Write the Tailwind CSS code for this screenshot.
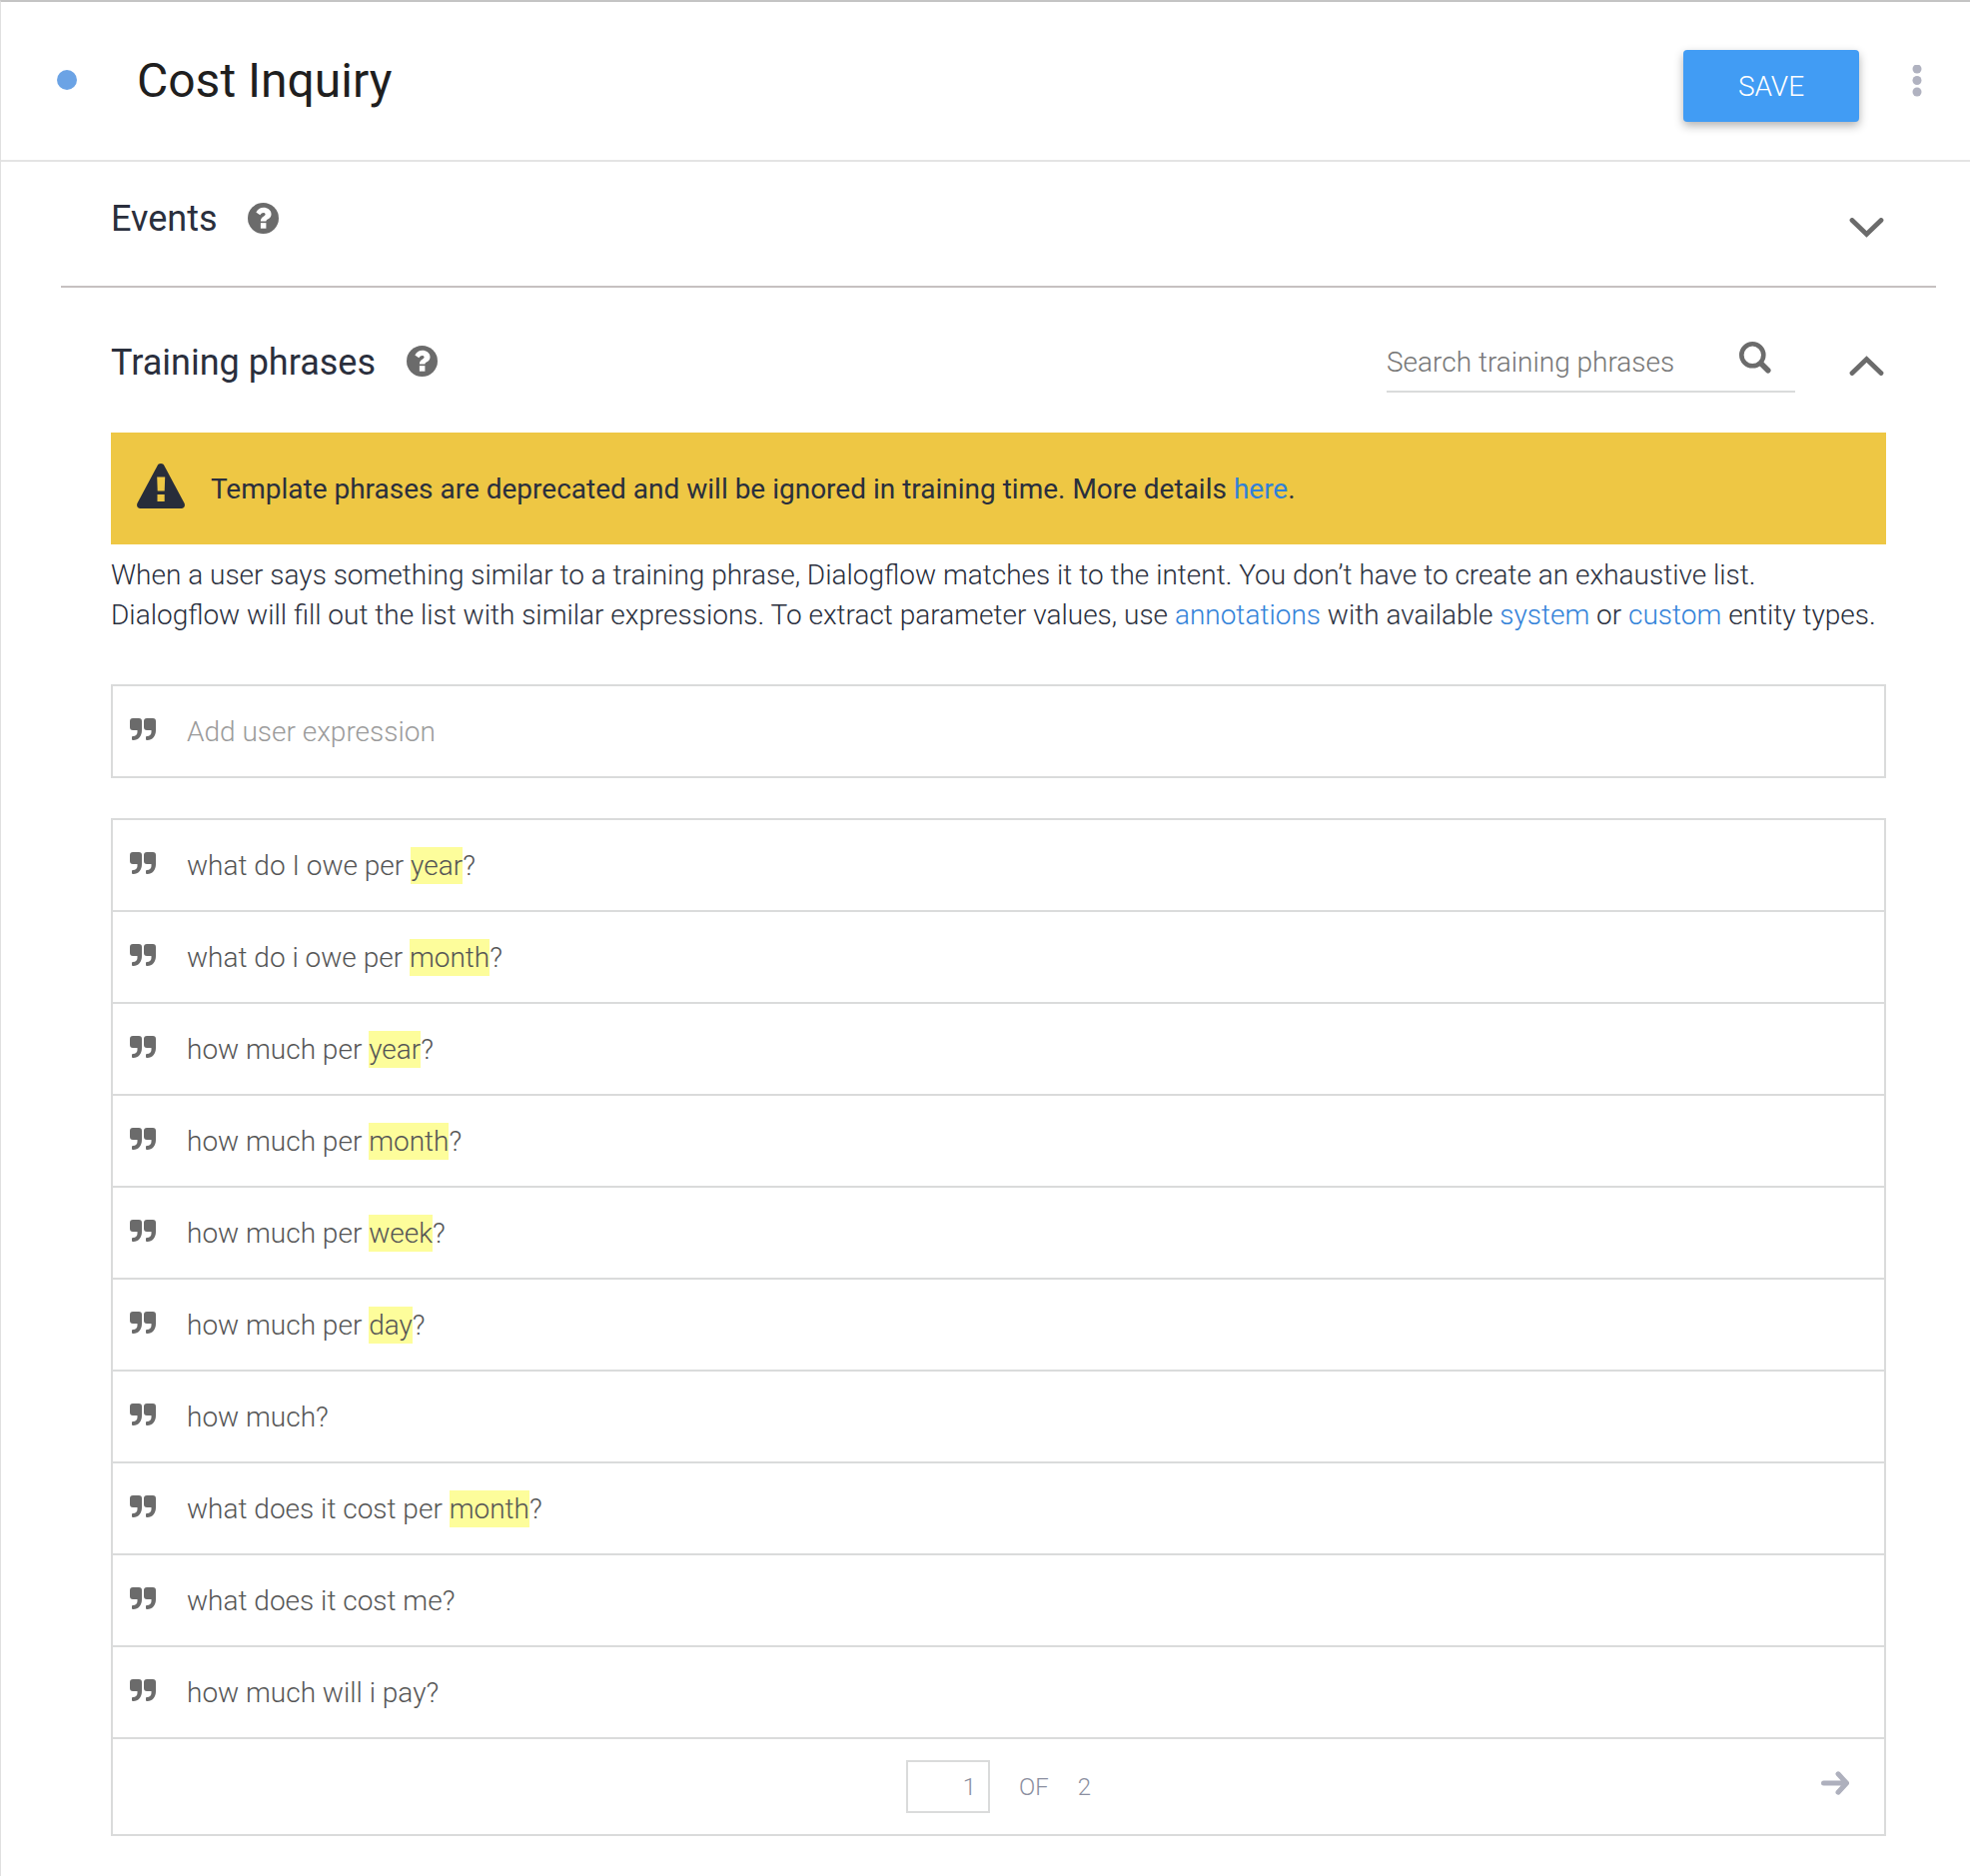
<!DOCTYPE html>
<html lang="en">
<head>
<meta charset="utf-8">
<meta name="viewport" content="width=device-width, initial-scale=1">
<title>Cost Inquiry</title>
<script src="https://cdn.jsdelivr.net/npm/@tailwindcss/browser@4"></script>
</head>
<body class="bg-white font-[Roboto,sans-serif] text-[28px] font-light leading-10 text-[#2a2f3d]">
<svg class="hidden" aria-hidden="true">
  <symbol id="quote" viewBox="0 0 26 28">
    <path d="M3 0h6a3 3 0 0 1 3 3v9c0 6-3.500 10-8.500 10h-.500a1 1 0 0 1-1-1v-2a1 1 0 0 1 1-1c3 0 4.500-2 4.500-4v-2H3a3 3 0 0 1-3-3V3a3 3 0 0 1 3-3zM17 0h6a3 3 0 0 1 3 3v9c0 6-3.500 10-8.500 10h-.500a1 1 0 0 1-1-1v-2a1 1 0 0 1 1-1c3 0 4.500-2 4.500-4v-2H17a3 3 0 0 1-3-3V3a3 3 0 0 1 3-3z" fill="#6b6b6b"/>
  </symbol>
  <symbol id="help" viewBox="0 0 32 32">
    <circle cx="16" cy="16" r="16" fill="#6b6b6b"/>
    <path d="M8.600 9.800C10.300 6.700 12.800 5 16.300 5c4 0 8 2.500 8 6.800 0 5-5.300 4.600-5.300 7.400H13.300c0-5.500 4.900-5 4.900-7.400 0-1-.900-1.600-2-1.600-1.400 0-2.300.700-3.500 2.400z" fill="#fff"/>
    <path d="M13.300 20.800H19v5.700h-5.700z" fill="#fff"/>
  </symbol>
</svg>

<div class="min-h-screen border-t-2 border-l border-t-[#c4c4c4] border-l-[#e0e0e0]">
  <header class="flex h-40 items-center border-b-2 border-[#e4e4e4] pl-14 pr-[37px]">
    <span class="mb-0.5 size-5 rounded-full bg-[#6ba3e5]"></span>
    <h1 class="ml-15 flex-1 text-[48px] font-normal leading-14 text-[#1f1f1f]">Cost Inquiry</h1>
    <button type="button" class="mt-2.5 h-18 w-44 rounded-sm bg-[#419cf4] pt-0.5 text-white shadow-[0_4px_10px_rgba(0,0,0,0.3)]">SAVE</button>
    <button type="button" aria-label="More options" class="ml-[42px] flex w-8 justify-center">
      <svg class="h-8 w-[10px]" viewBox="0 0 10 32" fill="#b0b2c0"><circle cx="5" cy="4" r="4.500"/><circle cx="5" cy="15.500" r="4.500"/><circle cx="5" cy="27" r="4.500"/></svg>
    </button>
  </header>

  <main class="ml-[60px] mr-[34px]">
    <section class="flex h-[126px] items-center border-b-2 border-[#c6c1c1] px-[50px] pb-2.5">
      <h2 class="text-[36px] font-normal">Events</h2>
      <button type="button" aria-label="About events" class="mb-0.5 ml-[30px]"><svg class="size-[31px]"><use href="#help"/></svg></button>
      <button type="button" aria-label="Expand events" class="ml-auto mt-[18px]">
        <svg class="h-5 w-[37px]" viewBox="0 0 37 20" fill="none" stroke="#6b6b6b" stroke-width="4.800" stroke-linecap="round"><path d="M3 2.500 17.500 16.500 32 2.500"/></svg>
      </button>
    </section>

    <section class="px-[50px]">
      <div class="flex h-[145px] items-center pt-1">
        <h2 class="text-[36px] font-normal">Training phrases</h2>
        <button type="button" aria-label="About training phrases" class="mb-0.5 ml-[31px]"><svg class="size-[31px]"><use href="#help"/></svg></button>
        <div class="ml-auto flex h-15 w-[409px] items-center border-b-2 border-[#dadbdb] pr-6">
          <input type="search" aria-label="Search training phrases" placeholder="Search training phrases" class="min-w-0 flex-1 pt-0.5 outline-none placeholder:text-[#757575]">
          <button type="button" aria-label="Search" class="mb-2">
            <svg class="size-8" viewBox="0 0 32 32" fill="none" stroke="#6b6b6b"><circle cx="13.300" cy="13.300" r="11" stroke-width="4.600"/><path d="M22 22l6.800 6.800" stroke-width="5.500" stroke-linecap="round"/></svg>
          </button>
        </div>
        <button type="button" aria-label="Collapse training phrases" class="ml-[54px] mt-1.5">
          <svg class="h-5 w-[37px]" viewBox="0 0 37 20" fill="none" stroke="#6b6b6b" stroke-width="4.800" stroke-linecap="round"><path d="M3 17.500 17.500 3.500 32 17.500"/></svg>
        </button>
      </div>

      <div role="alert" class="flex h-28 items-center gap-[26px] bg-[#eec744] px-[26px] pt-0.5 font-normal">
        <svg class="mb-2 h-[45px] w-12" viewBox="0 0 48 45"><path d="M24 0c1.600 0 2.800.800 3.600 2.400l19.800 37.200c1.400 2.700 0 5.400-3 5.400H3.600c-3 0-4.400-2.700-3-5.400L20.400 2.400C21.200.800 22.400 0 24 0z" fill="#282d3a"/><path d="M20.200 13.500h8l-.500 14h-7zM20.500 31h7.200v7h-7.200z" fill="#eec744"/></svg>
        <p>Template phrases are deprecated and will be ignored in training time. More details <a href="#" class="text-[#3181d8]">here</a>.</p>
      </div>

      <p class="pt-[11px]">When a user says something similar to a training phrase, Dialogflow matches it to the intent. You don’t have to create an exhaustive list.<br>Dialogflow will fill out the list with similar expressions. To extract parameter values, use <a href="#" class="text-[#3181d8]">annotations</a> with available <a href="#" class="text-[#3181d8]">system</a> or <a href="#" class="text-[#3181d8]">custom</a> entity types.</p>

      <div class="mt-[49px] flex h-[94px] items-center gap-[31px] border-2 border-[#dadbdb] pl-[17px] pr-4 pt-0.5">
        <svg class="h-7 w-[26px] shrink-0"><use href="#quote"/></svg>
        <input type="text" aria-label="Add user expression" placeholder="Add user expression" class="min-w-0 flex-1 outline-none placeholder:text-[#9b9b9b]">
      </div>

      <div class="mt-10 border-2 border-[#dadbdb] text-[#555555]">
        <ul>
          <li class="flex h-[92px] items-center gap-[31px] border-b-2 border-[#dadbdb] pl-[17px] pt-0.5"><svg class="h-7 w-[26px]"><use href="#quote"/></svg><p>what do I owe per <mark class="bg-[#fdfd9b] py-0.5 text-inherit">year</mark>?</p></li>
          <li class="flex h-[92px] items-center gap-[31px] border-b-2 border-[#dadbdb] pl-[17px] pt-0.5"><svg class="h-7 w-[26px]"><use href="#quote"/></svg><p>what do i owe per <mark class="bg-[#fdfd9b] py-0.5 text-inherit">month</mark>?</p></li>
          <li class="flex h-[92px] items-center gap-[31px] border-b-2 border-[#dadbdb] pl-[17px] pt-0.5"><svg class="h-7 w-[26px]"><use href="#quote"/></svg><p>how much per <mark class="bg-[#fdfd9b] py-0.5 text-inherit">year</mark>?</p></li>
          <li class="flex h-[92px] items-center gap-[31px] border-b-2 border-[#dadbdb] pl-[17px] pt-0.5"><svg class="h-7 w-[26px]"><use href="#quote"/></svg><p>how much per <mark class="bg-[#fdfd9b] py-0.5 text-inherit">month</mark>?</p></li>
          <li class="flex h-[92px] items-center gap-[31px] border-b-2 border-[#dadbdb] pl-[17px] pt-0.5"><svg class="h-7 w-[26px]"><use href="#quote"/></svg><p>how much per <mark class="bg-[#fdfd9b] py-0.5 text-inherit">week</mark>?</p></li>
          <li class="flex h-[92px] items-center gap-[31px] border-b-2 border-[#dadbdb] pl-[17px] pt-0.5"><svg class="h-7 w-[26px]"><use href="#quote"/></svg><p>how much per <mark class="bg-[#fdfd9b] py-0.5 text-inherit">day</mark>?</p></li>
          <li class="flex h-[92px] items-center gap-[31px] border-b-2 border-[#dadbdb] pl-[17px] pt-0.5"><svg class="h-7 w-[26px]"><use href="#quote"/></svg><p>how much?</p></li>
          <li class="flex h-[92px] items-center gap-[31px] border-b-2 border-[#dadbdb] pl-[17px] pt-0.5"><svg class="h-7 w-[26px]"><use href="#quote"/></svg><p>what does it cost per <mark class="bg-[#fdfd9b] py-0.5 text-inherit">month</mark>?</p></li>
          <li class="flex h-[92px] items-center gap-[31px] border-b-2 border-[#dadbdb] pl-[17px] pt-0.5"><svg class="h-7 w-[26px]"><use href="#quote"/></svg><p>what does it cost me?</p></li>
          <li class="flex h-[92px] items-center gap-[31px] border-b-2 border-[#dadbdb] pl-[17px] pt-0.5"><svg class="h-7 w-[26px]"><use href="#quote"/></svg><p>how much will i pay?</p></li>
        </ul>
        <nav aria-label="Pages" class="grid h-[95px] grid-cols-[1fr_auto_1fr] items-center text-[24px] text-[#8b8fa0]">
          <div class="col-start-2 flex items-center gap-[29px]">
            <input type="text" aria-label="Page" value="1" class="h-[53px] w-[84px] border-2 border-[#dadbdb] pr-3 text-right outline-none">
            <span>OF</span>
            <span>2</span>
          </div>
          <div class="flex justify-end pb-2 pr-[35px]">
            <button type="button" aria-label="Next page">
              <svg class="h-6 w-7" viewBox="0 0 28 24" fill="none" stroke="#aeb0bd" stroke-width="5" stroke-linecap="round" stroke-linejoin="round"><path d="M2.500 12H24M17 2.800 25.500 12 17 21.200"/></svg>
            </button>
          </div>
        </nav>
      </div>
    </section>
  </main>
</div>
</body>
</html>
